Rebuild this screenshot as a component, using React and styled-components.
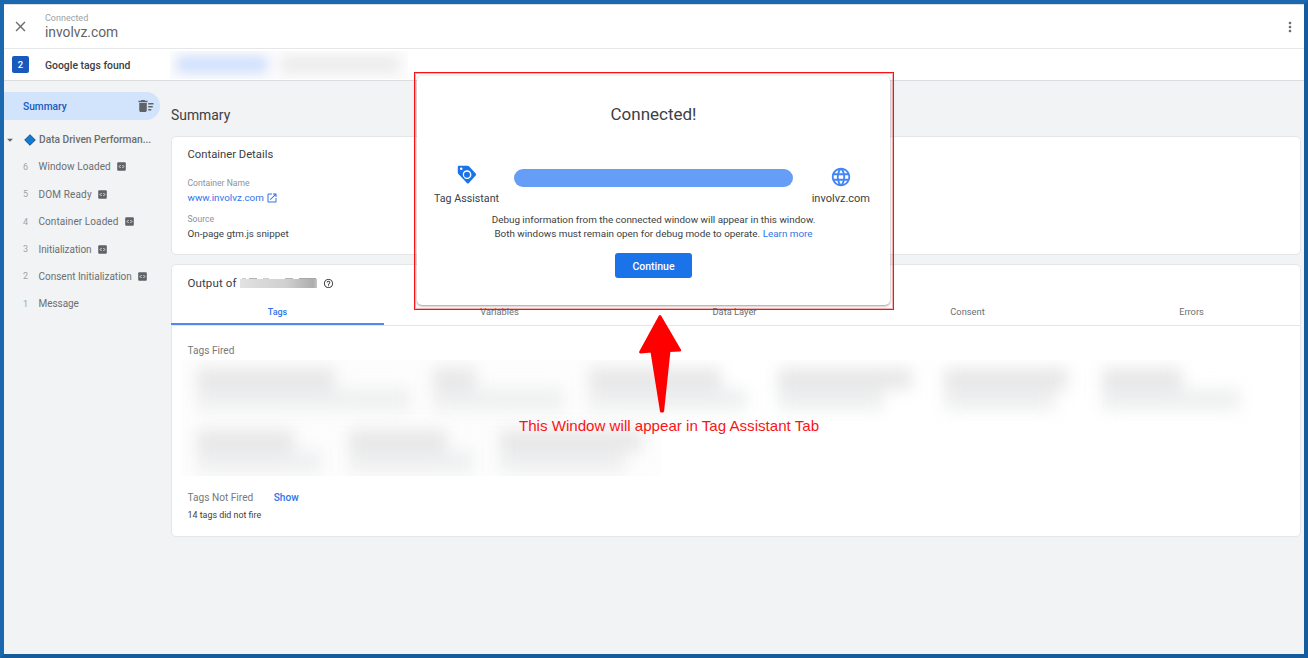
import React from 'react';
import styled, { createGlobalStyle, css } from 'styled-components';
import {
  MdArrowDropDown,
  MdClose,
  MdDeleteSweep,
  MdHelpOutline,
  MdLanguage,
  MdMoreVert,
  MdOpenInNew,
} from 'react-icons/md';

const GlobalStyle = createGlobalStyle`
  * { box-sizing: border-box; }
  body {
    margin: 0;
    font-family: Roboto, "Liberation Sans", sans-serif;
    color: #3c4043;
  }
  svg { display: block; flex: none; }
`;

const Frame = styled.div`
  position: relative;
  display: flex;
  flex-direction: column;
  width: 1308px;
  height: 658px;
  overflow: hidden;
  border: 4px solid;
  border-color: #1b68ae #165c9c #165c9c #1b68ae;
  background: #f1f3f4;
`;

/* Header */

const Header = styled.header`
  display: flex;
  align-items: center;
  height: 45px;
  padding: 0 6px 0 8px;
  background: #fff;
  border-top: 1px solid #dcdfe2;
  border-bottom: 1px solid #e6e7e8;
  color: #6a6d70;
`;

const SiteInfo = styled.div`
  display: flex;
  flex-direction: column;
  flex: 1;
  padding: 0 0 1px 16px;
`;

const SiteStatus = styled.span`
  font-size: 9px;
  line-height: 12px;
  color: #9c9fa2;
`;

const SiteName = styled.span`
  font-size: 13.8px;
  line-height: 16px;
  color: #5f6368;
`;

const TagBar = styled.div`
  display: flex;
  align-items: center;
  height: 32px;
  padding-left: 8px;
  background: #fff;
  border-bottom: 1px solid #dadce0;
`;

const TagCount = styled.span`
  width: 17px;
  height: 17px;
  border-radius: 2px;
  background: #185abc;
  color: #fff;
  font-size: 9.5px;
  font-weight: 500;
  line-height: 17px;
  text-align: center;
`;

const TagBarLabel = styled.span`
  width: 125px;
  padding: 1px 0 0 16px;
  font-size: 10.4px;
  font-weight: 500;
`;

const HiddenTabs = styled.div`
  display: flex;
  align-items: center;
  gap: 14px;
  width: 238px;
  height: 28px;
  margin-left: 16px;
  padding: 0 5px 0 7px;
  overflow: hidden;
  background: #fcfcfd;
`;

const HiddenTab = styled.span`
  width: ${(p) => p.$width}px;
  height: 17px;
  background: ${(p) => (p.$active ? '#cfdffc' : '#ececed')};
  filter: blur(6px);
`;

/* Sidebar */

const Body = styled.div`
  display: flex;
  flex: 1;
`;

const Sidebar = styled.nav`
  width: 167px;
  padding-top: 11px;
`;

const SummaryItem = styled.div`
  display: flex;
  align-items: center;
  justify-content: space-between;
  width: 156px;
  height: 28px;
  padding: 0 5px 0 19px;
  border-radius: 0 14px 14px 0;
  background: #d2e3fc;
  color: #185abc;
  font-size: 10.2px;
  font-weight: 500;

  svg { color: #5f6368; }
`;

const PageGroup = styled.div`
  display: flex;
  align-items: center;
  height: 27px;
  margin-top: 6px;
  font-size: 10.2px;
  font-weight: 500;
  color: #6a6d70;
  white-space: nowrap;
`;

const GroupCaret = styled(MdArrowDropDown)`
  margin: 0 7px 0 -1px;
  color: #5f6368;
`;

const GroupName = styled.span`
  padding-left: 3px;
`;

const EventItem = styled.div`
  display: flex;
  align-items: center;
  height: 27.45px;
  padding-left: 19px;
  font-size: 10px;
  color: #6c6f72;
`;

const EventIndex = styled.span`
  width: 15.5px;
  font-size: 9px;
  color: #a0a3a6;
`;

const EventName = styled.span`
  padding-right: 6.5px;
  letter-spacing: ${(p) => p.$spacing}px;
`;

/* Main column */

const Main = styled.main`
  flex: 1;
  padding: 24px 3px 0 0;
`;

const PageTitle = styled.h1`
  margin: 0;
  font-size: 13.9px;
  font-weight: 400;
  line-height: 20px;
`;

const Card = styled.section`
  height: ${(p) => p.$height}px;
  margin-top: ${(p) => p.$gap}px;
  background: #fff;
  border: 1px solid #e4e6e8;
  border-radius: 5px;
`;

const DetailsBody = styled.div`
  padding: 10px 15.5px;
`;

const CardTitle = styled.h2`
  display: flex;
  align-items: center;
  margin: 0;
  font-size: 11.25px;
  font-weight: 400;
  line-height: 16px;
`;

const FieldLabel = styled.div`
  padding-top: ${(p) => p.$top}px;
  font-size: 8.6px;
  line-height: 12px;
  color: #8f9295;
`;

const FieldValue = styled.div`
  display: flex;
  align-items: center;
  gap: 2px;
  padding-top: 2px;
  font-size: 9.85px;
  line-height: 14px;
  color: ${(p) => (p.$link ? '#2f74ea' : '#3c4043')};
`;

const OutputHeader = styled.div`
  padding: 10px 15.5px 9px;

  svg { margin-left: 6px; }
`;

const OutputLabel = styled.span`
  padding-right: 3px;
  font-size: 11.5px;
  letter-spacing: 0.12px;
`;

const RedactedId = styled.span`
  width: 77px;
  height: 10px;
  background:
    linear-gradient(#c9cbcc, #c9cbcc) 2px 0 / 4px 1px no-repeat,
    linear-gradient(#b0b2b4, #b0b2b4) 9px 0 / 8px 1px no-repeat,
    linear-gradient(#cdcfd0, #cdcfd0) 23px 0 / 6px 1px no-repeat,
    linear-gradient(#b4b6b8, #b4b6b8) 45px 0 / 8px 1px no-repeat,
    linear-gradient(#a4a6a8, #a4a6a8) 59px 0 / 17px 1px no-repeat,
    linear-gradient(90deg, #e2e2e2, #d9d9d9 25%, #d0d0d0 60%, #adadad 95%, #c4c4c4) 0 1px / 100% 9px no-repeat;
`;

const Tabs = styled.div`
  display: grid;
  grid-template-columns: 212px 231px 239px 227px 1fr;
  height: 26px;
  border-bottom: 1px solid #e4e6e8;
`;

const Tab = styled.div`
  height: 25px;
  font-size: 9.3px;
  line-height: 24px;
  text-align: center;
  color: #6c6f72;
  &:last-child { padding-left: 2px; }
  ${(p) =>
    p.$active &&
    css`
      margin-left: -1px;
      border-bottom: 2px solid #4f8af0;
      color: #2f74ea;
      font-size: 9px;
      font-weight: 500;
    `}
`;

const TagsSection = styled.div`
  padding: 17px 15.5px 0;
`;

const SectionRow = styled.div`
  display: flex;
  gap: 20.5px;
  font-size: 10.15px;
  line-height: 16px;
  color: #77797c;
`;

const ShowLink = styled.a`
  font-weight: 500;
  color: #2f74ea;
`;

const BlurPanel = styled.div`
  display: flex;
  flex-direction: column;
  gap: 20px;
  width: 1078px;
  height: 116px;
  margin: 1px 0 14px -7px;
  padding: 8px 16px 0;
  overflow: hidden;
  background: linear-gradient(#fdfdfd, #fdfdfd) 0 0 / 480px 100% no-repeat;
`;

const BlurRow = styled.div`
  display: flex;
`;

const BlurCell = styled.div`
  flex: none;
  width: ${(p) => p.$width}px;
  filter: blur(8px);
`;

const BlurHeading = styled.div`
  width: ${(p) => p.$width}px;
  height: 21px;
  background: #e7e7e8;
`;

const BlurText = styled.div`
  width: ${(p) => p.$width}px;
  height: 21px;
  background: #eeeff0;
`;

const Footnote = styled.div`
  padding-top: 3px;
  font-size: 8.9px;
  line-height: 12px;
`;

/* Connection dialog */

const Dialog = styled.div`
  position: absolute;
  top: 72px;
  left: 413px;
  display: flex;
  flex-direction: column;
  align-items: center;
  width: 473px;
  height: 229px;
  padding-top: 27px;
  background: #fff;
  border-radius: 5px;
  box-shadow: 0 1px 2px rgba(0, 0, 0, 0.3), 0 1px 5px 1px rgba(60, 64, 67, 0.13);
`;

const DialogTitle = styled.h2`
  margin: 0;
  font-size: 17px;
  font-weight: 400;
  line-height: 22px;
`;

const Connection = styled.div`
  display: flex;
  justify-content: space-between;
  width: 100%;
  margin-top: 40px;
  padding: 0 20px 0 17px;
`;

const Endpoint = styled.div`
  display: flex;
  flex-direction: column;
  align-items: center;
  justify-content: space-between;
  height: 42px;
  padding-top: ${(p) => p.$top}px;
  font-size: ${(p) => p.$size}px;
  line-height: 16px;
`;

const ProgressBar = styled.div`
  width: 279px;
  height: 18px;
  margin: 4px 3px 0 0;
  border-radius: 9px;
  background: #669df6;
`;

const DialogText = styled.p`
  margin: 6px 0 0;
  font-size: 9.88px;
  line-height: 14px;
  text-align: center;
`;

const LearnMore = styled.a`
  color: #2f74ea;
`;

const ContinueButton = styled.button`
  width: 77px;
  height: 25px;
  margin-top: 12px;
  padding: 1px 0 0;
  border: 0;
  border-radius: 3px;
  background: #1a73e8;
  color: #fff;
  font-family: inherit;
  font-size: 10.5px;
  font-weight: 500;
`;

/* Annotation drawn over the page */

const Highlight = styled.div`
  position: absolute;
  top: 68px;
  left: 410px;
  width: 480px;
  height: 238px;
  border: 1px solid #f81414;
  box-shadow: inset 0 0 0 1px rgba(255, 0, 0, 0.3);
`;

const Annotation = styled.div`
  position: absolute;
  top: 310px;
  left: 505px;
  display: flex;
  flex-direction: column;
  align-items: center;
  width: 320px;
`;

const AnnotationText = styled.div`
  margin-top: 3px;
  font-family: "Liberation Sans", Arial, sans-serif;
  font-size: 15.12px;
  line-height: 18px;
  color: #fb1414;
  white-space: nowrap;
`;

const ArrowIcon = styled.svg`
  margin-right: 18px;
`;

const EVENTS = [
  { index: 6, name: 'Window Loaded', code: true, spacing: 0.08 },
  { index: 5, name: 'DOM Ready', code: true, spacing: 0.15 },
  { index: 4, name: 'Container Loaded', code: true, spacing: 0.08 },
  { index: 3, name: 'Initialization', code: true, spacing: -0.07 },
  { index: 2, name: 'Consent Initialization', code: true, spacing: -0.01 },
  { index: 1, name: 'Message', code: false, spacing: -0.05 },
];

const FIRED_ROWS = [
  [
    [236, 138, 213],
    [156, 43, 130],
    [189, 132, 158],
    [166, 134, 106],
    [158, 124, 112],
    [150, 80, 138],
  ],
  [
    [152, 97, 124],
    [151, 98, 124],
    [160, 142, 126],
  ],
];

function CodeBadge() {
  return (
    <svg width="9" height="9" viewBox="0 0 9 9">
      <rect x="0.2" y="0.3" width="8.6" height="8.4" rx="1" fill="#5f6368" />
      <path d="M3.6 3 2.1 4.5 3.6 6M5.4 3 6.9 4.5 5.4 6" fill="none" stroke="#fff" strokeWidth="0.85" />
    </svg>
  );
}

function Diamond() {
  return (
    <svg width="12" height="12" viewBox="0 0 12 12">
      <path d="M6 .7 11.3 6 6 11.3.7 6Z" fill="#0b7bdc" stroke="#24435f" strokeWidth="0.9" strokeLinejoin="round" />
    </svg>
  );
}

function TagAssistantIcon() {
  return (
    <svg width="20" height="20" viewBox="0 0 20 20">
      <path
        d="M2 .7H10.6Q11.5.7 12.2 1.4L18.7 8.6Q19.6 9.6 18.7 10.6L11.9 17.9Q10.9 18.9 9.9 17.9L1.6 9.2Q.8 8.4.8 7.4V2Q.8.7 2 .7Z"
        fill="#1a73e8"
      />
      <circle cx="4.2" cy="3.8" r="1.3" fill="#fff" />
      <circle cx="10" cy="9.7" r="3.7" fill="none" stroke="#fff" strokeWidth="1.4" />
      <path d="M4.6 8.2Q4.6 11.2 6.9 13.6" fill="none" stroke="#1a73e8" strokeWidth="1.5" />
    </svg>
  );
}

function Arrow() {
  return (
    <ArrowIcon width="44" height="100" viewBox="0 0 44 100">
      <path
        d="M22 2.2 42 36.3 31.3 36.7 24.9 97.2H23.2L13.6 37.4 2.3 38.2Z"
        fill="#f00"
        stroke="#f00"
        strokeWidth="2.4"
        strokeLinejoin="round"
      />
    </ArrowIcon>
  );
}

export default function App() {
  return (
    <Frame>
      <GlobalStyle />
      <Header>
        <MdClose size={17} />
        <SiteInfo>
          <SiteStatus>Connected</SiteStatus>
          <SiteName>involvz.com</SiteName>
        </SiteInfo>
        <MdMoreVert size={16} />
      </Header>
      <TagBar>
        <TagCount>2</TagCount>
        <TagBarLabel>Google tags found</TagBarLabel>
        <HiddenTabs>
          <HiddenTab $width={90} $active />
          <HiddenTab $width={118} />
        </HiddenTabs>
      </TagBar>
      <Body>
        <Sidebar>
          <SummaryItem>
            Summary
            <MdDeleteSweep size={18} />
          </SummaryItem>
          <PageGroup>
            <GroupCaret size={14} />
            <Diamond />
            <GroupName>Data Driven Performan...</GroupName>
          </PageGroup>
          {EVENTS.map((event) => (
            <EventItem key={event.index}>
              <EventIndex>{event.index}</EventIndex>
              <EventName $spacing={event.spacing}>{event.name}</EventName>
              {event.code && <CodeBadge />}
            </EventItem>
          ))}
        </Sidebar>
        <Main>
          <PageTitle>Summary</PageTitle>
          <Card $gap={11} $height={119}>
            <DetailsBody>
              <CardTitle>Container Details</CardTitle>
              <FieldLabel $top={14}>Container Name</FieldLabel>
              <FieldValue $link>
                www.involvz.com
                <MdOpenInNew size={12} />
              </FieldValue>
              <FieldLabel $top={8}>Source</FieldLabel>
              <FieldValue>On-page gtm.js snippet</FieldValue>
            </DetailsBody>
          </Card>
          <Card $gap={9} $height={273}>
            <OutputHeader>
              <CardTitle>
                <OutputLabel>Output of</OutputLabel>
                <RedactedId />
                <MdHelpOutline size={11} />
              </CardTitle>
            </OutputHeader>
            <Tabs>
              <Tab $active>Tags</Tab>
              <Tab>Variables</Tab>
              <Tab>Data Layer</Tab>
              <Tab>Consent</Tab>
              <Tab>Errors</Tab>
            </Tabs>
            <TagsSection>
              <SectionRow>Tags Fired</SectionRow>
              <BlurPanel>
                {FIRED_ROWS.map((row, i) => (
                  <BlurRow key={i}>
                    {row.map(([cell, heading, text], j) => (
                      <BlurCell key={j} $width={cell}>
                        <BlurHeading $width={heading} />
                        <BlurText $width={text} />
                      </BlurCell>
                    ))}
                  </BlurRow>
                ))}
              </BlurPanel>
              <SectionRow>
                Tags Not Fired
                <ShowLink>Show</ShowLink>
              </SectionRow>
              <Footnote>14 tags did not fire</Footnote>
            </TagsSection>
          </Card>
        </Main>
      </Body>
      <Dialog>
        <DialogTitle>Connected!</DialogTitle>
        <Connection>
          <Endpoint $size={10.7} $top={0}>
            <TagAssistantIcon />
            Tag Assistant
          </Endpoint>
          <ProgressBar />
          <Endpoint $size={11} $top={1}>
            <MdLanguage size={22} color="#4285f4" />
            involvz.com
          </Endpoint>
        </Connection>
        <DialogText>
          Debug information from the connected window will appear in this window.
          <br />
          Both windows must remain open for debug mode to operate. <LearnMore>Learn more</LearnMore>
        </DialogText>
        <ContinueButton>Continue</ContinueButton>
      </Dialog>
      <Highlight />
      <Annotation>
        <Arrow />
        <AnnotationText>This Window will appear in Tag Assistant Tab</AnnotationText>
      </Annotation>
    </Frame>
  );
}
